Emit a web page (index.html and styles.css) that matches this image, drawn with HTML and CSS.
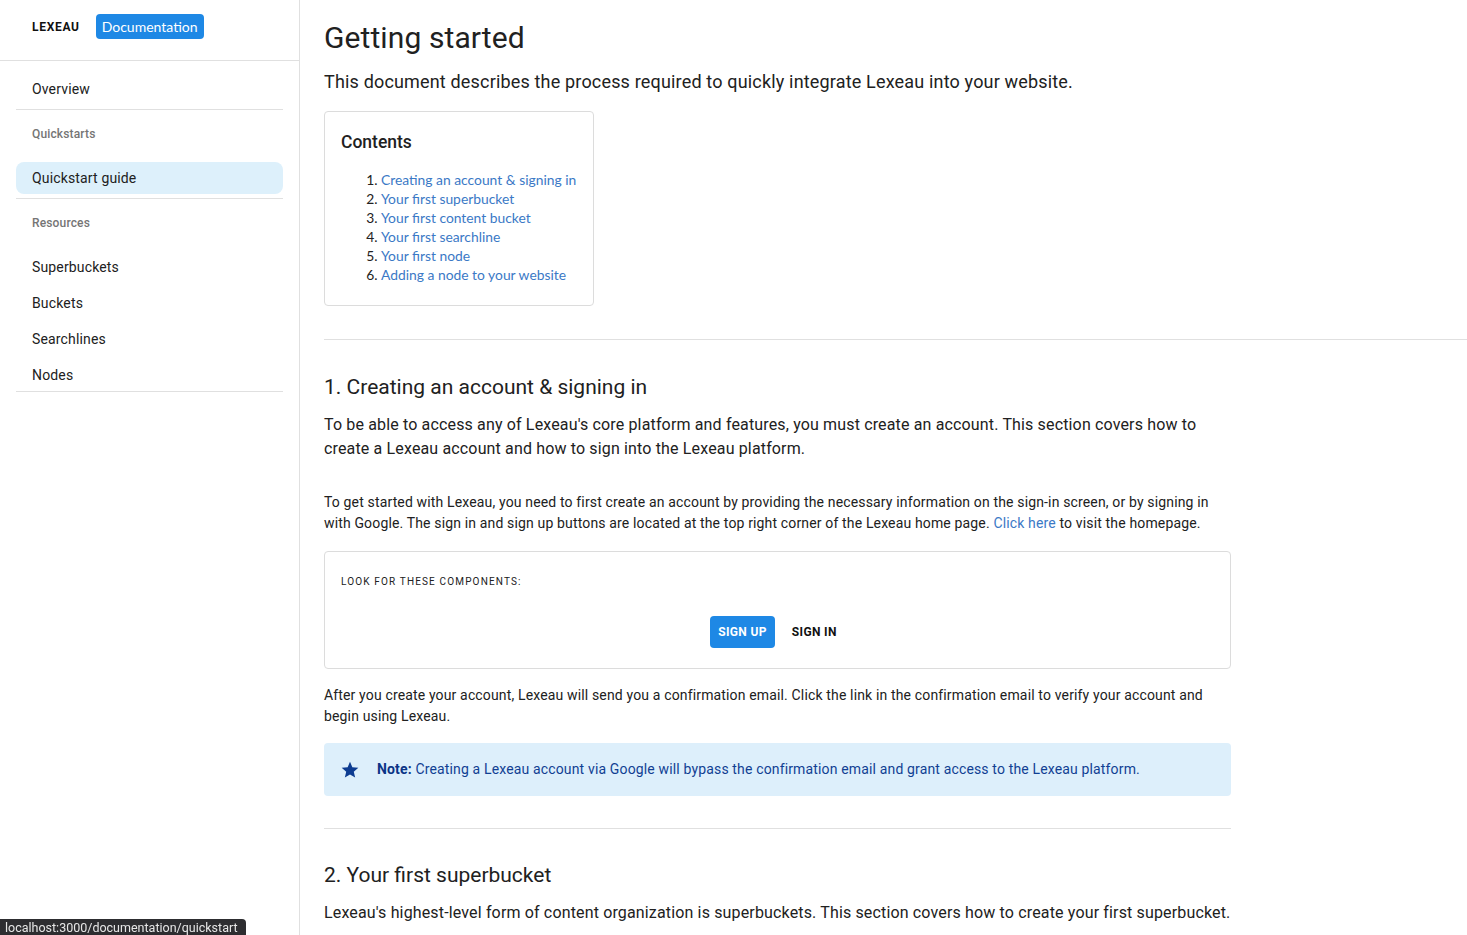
FILE: index.html
```html
<!DOCTYPE html>
<html lang="en">
<head>
<meta charset="utf-8">
<title>Lexeau Documentation</title>
<link rel="stylesheet" href="styles.css">
</head>
<body>
<div class="layout">
  <aside class="sidebar">
    <div class="brand">
      <span class="logo">LEXEAU</span>
      <span class="badge">Documentation</span>
    </div>
    <nav class="nav">
      <ul class="group group-first">
        <li class="item">Overview</li>
      </ul>
      <ul class="group">
        <li class="subheader">Quickstarts</li>
        <li class="item selected">Quickstart guide</li>
      </ul>
      <ul class="group group-last">
        <li class="subheader">Resources</li>
        <li class="item">Superbuckets</li>
        <li class="item">Buckets</li>
        <li class="item">Searchlines</li>
        <li class="item">Nodes</li>
      </ul>
    </nav>
  </aside>
  <main class="main">
    <h1 class="title">Getting started</h1>
    <p class="lead">This document describes the process required to quickly integrate Lexeau into your website.</p>
    <div class="toc">
      <h3 class="toc-title">Contents</h3>
      <ol class="toc-list">
        <li><a href="#s1">Creating an account &amp; signing in</a></li>
        <li><a href="#s2">Your first superbucket</a></li>
        <li><a href="#s3">Your first content bucket</a></li>
        <li><a href="#s4">Your first searchline</a></li>
        <li><a href="#s5">Your first node</a></li>
        <li><a href="#s6">Adding a node to your website</a></li>
      </ol>
    </div>
    <hr class="rule rule-full">
    <section class="section" id="s1">
      <h2 class="section-title">1. Creating an account &amp; signing in</h2>
      <p class="intro">To be able to access any of Lexeau's core platform and features, you must create an account. This section covers how to create a Lexeau account and how to sign into the Lexeau platform.</p>
      <p class="body body-gap">To get started with Lexeau, you need to first create an account by providing the necessary information on the sign-in screen, or by signing in with Google. The sign in and sign up buttons are located at the top right corner of the Lexeau home page. <a class="link" href="#">Click here</a> to visit the homepage.</p>
      <div class="components">
        <div class="components-label">LOOK FOR THESE COMPONENTS:</div>
        <div class="buttons">
          <span class="btn btn-primary">SIGN UP</span>
          <span class="btn btn-text">SIGN IN</span>
        </div>
      </div>
      <p class="body body-after">After you create your account, Lexeau will send you a confirmation email. Click the link in the confirmation email to verify your account and begin using Lexeau.</p>
      <div class="note">
        <svg class="star" viewBox="0 0 24 24" width="20" height="20" aria-hidden="true"><path d="M12 17.27L18.18 21l-1.64-7.03L22 9.24l-7.19-.61L12 2 9.19 8.63 2 9.24l5.46 4.73L5.82 21z"/></svg>
        <span><strong>Note:</strong> Creating a Lexeau account via Google will bypass the confirmation email and grant access to the Lexeau platform.</span>
      </div>
      <hr class="rule">
    </section>
    <section class="section" id="s2">
      <h2 class="section-title">2. Your first superbucket</h2>
      <p class="intro">Lexeau's highest-level form of content organization is superbuckets. This section covers how to create your first superbucket.</p>
    </section>
  </main>
</div>
<div class="status">localhost:3000/documentation/quickstart</div>
</body>
</html>
```

FILE: styles.css
```css
html, body {
  margin: 0;
  padding: 0;
  background: #ffffff;
  color: #212121;
  font-family: Roboto, "Noto Sans", Arial, sans-serif;
  letter-spacing: 0.15px;
}

.layout {
  display: flex;
  height: 935px;
  overflow: hidden;
}

.sidebar {
  width: 300px;
  flex: 0 0 300px;
  box-sizing: border-box;
  border-right: 1px solid #e0e0e0;
}

.brand {
  height: 61px;
  box-sizing: border-box;
  padding: 14px 32px 0;
  border-bottom: 1px solid #e0e0e0;
  display: flex;
  align-items: flex-start;
}

.logo {
  font-size: 12px;
  font-weight: 700;
  color: #111;
  line-height: 26px;
  letter-spacing: 0.7px;
}

.badge {
  margin-left: 16px;
  background: #1e88e5;
  color: #fff;
  font-family: Lato, Roboto, sans-serif;
  font-size: 14px;
  letter-spacing: 0;
  line-height: 25px;
  height: 25px;
  padding: 0 6px;
  border-radius: 4px;
}

.nav {
  padding: 0 16px;
}

.group {
  list-style: none;
  margin: 0;
  padding: 0 0 4px;
  border-bottom: 1px solid #e0e0e0;
}

.group-first {
  padding-top: 12px;
}

.group-last {
  padding-bottom: 0;
}

.subheader {
  height: 48px;
  line-height: 48px;
  padding-left: 16px;
  font-size: 12px;
  font-weight: 500;
  color: #757575;
}

.item {
  height: 32px;
  line-height: 32px;
  padding-left: 16px;
  font-size: 14px;
  color: #212121;
  margin-top: 4px;
  border-radius: 8px;
}

.group-first .item {
  margin-top: 0;
}

.item.selected {
  background: #ddf0fb;
}

.main {
  flex: 1;
  padding: 18px 0 0 24px;
  min-width: 0;
}

.title {
  margin: 0;
  font-size: 30px;
  line-height: 40px;
  font-weight: 400;
  letter-spacing: 0.1px;
  color: #212121;
}

.lead {
  margin: 10px 0 0;
  font-size: 18px;
  line-height: 27px;
  letter-spacing: 0.17px;
}

.toc {
  display: inline-block;
  margin-top: 16px;
  border: 1px solid #dcdcdc;
  border-radius: 4px;
  padding: 18px 17px 21px 16px;
}

.toc-title {
  margin: 0;
  font-size: 17.5px;
  line-height: 24px;
  font-weight: 500;
  letter-spacing: 0;
}

.toc-list {
  margin: 16px 0 0;
  padding-left: 40px;
  font-family: Lato, sans-serif;
  font-size: 13.85px;
  line-height: 19px;
  letter-spacing: 0;
  color: #222;
}

.toc-list a {
  color: #3b79c6;
  text-decoration: none;
}

.rule {
  border: 0;
  border-top: 1px solid #e0e0e0;
  margin: 32px 0 0;
  height: 0;
}

.rule-full {
  margin-top: 33px;
}

.section {
  max-width: 907px;
}

.section-title {
  margin: 31px 0 0;
  font-size: 21px;
  line-height: 32px;
  font-weight: 400;
  letter-spacing: 0;
}

.intro {
  margin: 10px 0 0;
  font-size: 16px;
  line-height: 24px;
}

.body {
  font-size: 14px;
  line-height: 21px;
  margin: 0;
}

.body-gap {
  margin-top: 31px;
}

.body-after {
  margin-top: 16px;
}

.link {
  color: #3b79c6;
  text-decoration: none;
}

.components {
  margin-top: 17px;
  border: 1px solid #dcdcdc;
  border-radius: 4px;
  padding: 22px 16px 20px;
}

.components-label {
  font-size: 10px;
  line-height: 16px;
  letter-spacing: 1.15px;
  color: #212121;
}

.buttons {
  margin-top: 26px;
  display: flex;
  justify-content: center;
}

.btn {
  height: 32px;
  line-height: 32px;
  padding: 0 8px;
  font-size: 12px;
  font-weight: 700;
  letter-spacing: 0.35px;
  border-radius: 4px;
}

.btn-primary {
  background: #1e88e5;
  color: #fff;
}

.btn-text {
  margin-left: 9px;
  color: #111;
}

.note {
  margin-top: 16px;
  background: #ddeffb;
  border-radius: 4px;
  padding: 16px;
  display: flex;
  align-items: center;
  gap: 17px;
  font-size: 14px;
  line-height: 21px;
  color: #113f93;
}

.note strong {
  font-weight: 700;
  color: #0b3486;
}

.star {
  fill: #0d3c91;
  flex: 0 0 20px;
}

.section + .section .section-title {
  margin-top: 30px;
}

.status {
  position: fixed;
  left: 0;
  bottom: 0;
  height: 16px;
  line-height: 17px;
  padding: 0 8px 0 5px;
  background: #2d2d30;
  color: #e6e6e6;
  font-size: 12.5px;
  letter-spacing: 0;
  border-top-right-radius: 4px;
}
```
